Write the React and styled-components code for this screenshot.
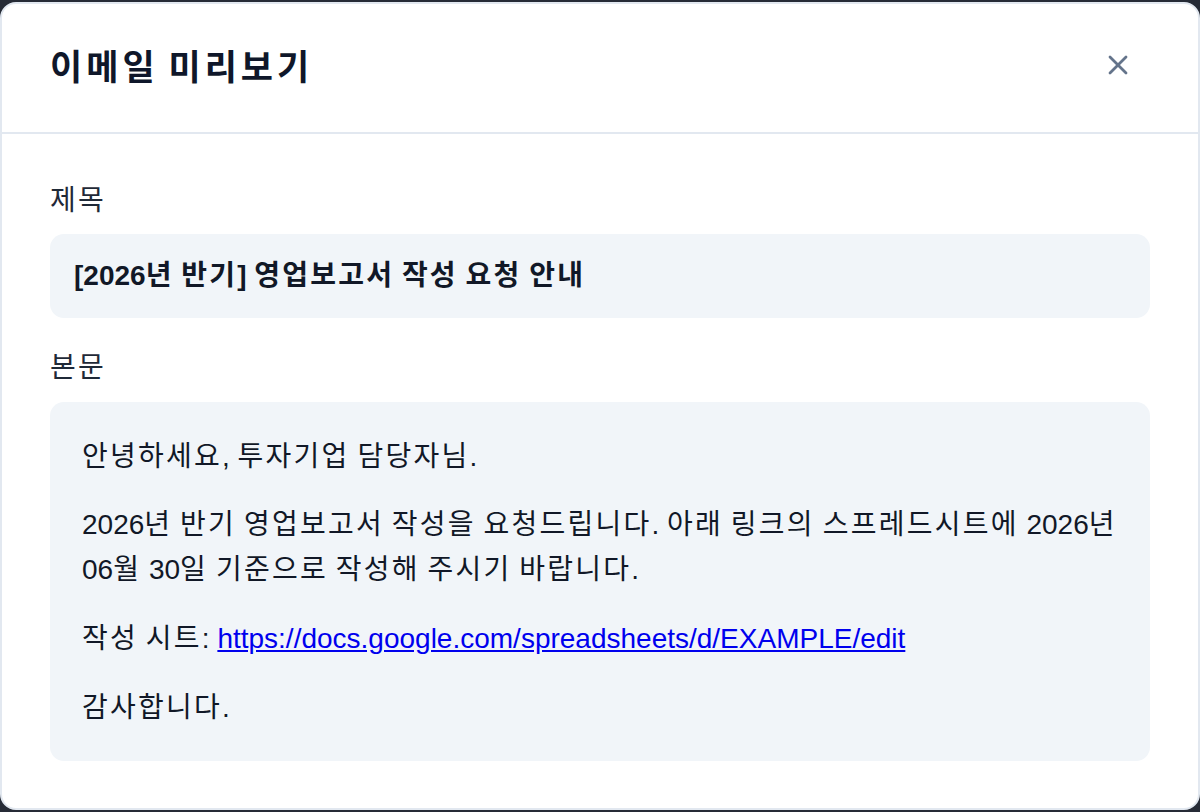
import React from 'react';
import styled, { createGlobalStyle } from 'styled-components';
import { X } from 'lucide-react';

const GlobalStyle = createGlobalStyle`
  html, body {
    margin: 0;
    padding: 0;
    background: #262b36;
  }
  body {
    font-family: "Liberation Sans", "Noto Sans CJK KR", sans-serif;
    color: #111827;
  }
  * { box-sizing: border-box; }
`;

const Modal = styled.div`
  margin-top: 2px;
  height: 808px;
  width: 1200px;
  background: #ffffff;
  border: 2px solid #e2e8f0;
  border-radius: 16px;
  display: flex;
  flex-direction: column;
  overflow: hidden;
`;

const Header = styled.header`
  display: flex;
  align-items: center;
  justify-content: space-between;
  height: 130px;
  padding: 0 48px;
  border-bottom: 2px solid #e2e8f0;
  flex-shrink: 0;
`;

const Title = styled.h2`
  margin: 0;
  font-size: 35px;
  font-weight: 700;
  color: #0f172a;
  line-height: 1.2;
`;

const CloseButton = styled.button`
  width: 64px;
  height: 64px;
  margin-bottom: 6px;
  display: flex;
  align-items: center;
  justify-content: center;
  border: none;
  background: transparent;
  color: #64748b;
  cursor: pointer;
  padding: 0;
`;

const Body = styled.div`
  display: flex;
  flex-direction: column;
  padding: 45px 48px 48px;
`;

const Label = styled.div`
  font-size: 28px;
  line-height: 1.6;
  color: #1f2937;
  margin-top: ${({ $first }) => ($first ? '0' : '28px')};
  margin-bottom: ${({ $first }) => ($first ? '10px' : '11px')};
`;

const Box = styled.div`
  background: #f1f5f9;
  border-radius: 14px;
  padding: ${({ $pad }) => $pad};
  font-size: 28px;
  color: #111827;
`;

const Subject = styled.div`
  font-weight: 700;
  line-height: 28px;
`;

const Para = styled.p`
  margin: 0 0 24px;
  line-height: 1.6;
  &:last-child { margin-bottom: 0; }
`;

const Link = styled.a`
  color: #0000ee;
  text-decoration: underline;
`;

// hangul runs sit a little wider in the reference
const Ko = styled.span`
  letter-spacing: ${({ $ls }) => $ls || '0.08em'};
`;

const ko = (text, ls) =>
  text.split(/([\uAC00-\uD7A3]+)/).map((part, i) =>
    /[\uAC00-\uD7A3]/.test(part) ? (
      <Ko key={i} $ls={ls}>{part}</Ko>
    ) : (
      part
    )
  );

export default function App() {
  return (
    <>
      <GlobalStyle />
      <Modal>
        <Header>
          <Title>{ko('이메일 미리보기', '0.115em')}</Title>
          <CloseButton aria-label="닫기">
            <X size={32} strokeWidth={2.1} />
          </CloseButton>
        </Header>
        <Body>
          <Label $first>{ko('제목')}</Label>
          <Box $pad="28px 24px 28px">
            <Subject>{ko('[2026년 반기] 영업보고서 작성 요청 안내', '0.078em')}</Subject>
          </Box>
          <Label>{ko('본문')}</Label>
          <Box $pad="33px 26px 30px 32px">
            <Para>{ko('안녕하세요, 투자기업 담당자님.')}</Para>
            <Para>
              {ko('2026년 반기 영업보고서 작성을 요청드립니다. 아래 링크의 스프레드시트에 2026년 06월 30일 기준으로 작성해 주시기 바랍니다.')}
            </Para>
            <Para>
              {ko('작성 시트:')}{' '}
              <Link href="https://docs.google.com/spreadsheets/d/EXAMPLE/edit">
                https://docs.google.com/spreadsheets/d/EXAMPLE/edit
              </Link>
            </Para>
            <Para>{ko('감사합니다.')}</Para>
          </Box>
        </Body>
      </Modal>
    </>
  );
}
